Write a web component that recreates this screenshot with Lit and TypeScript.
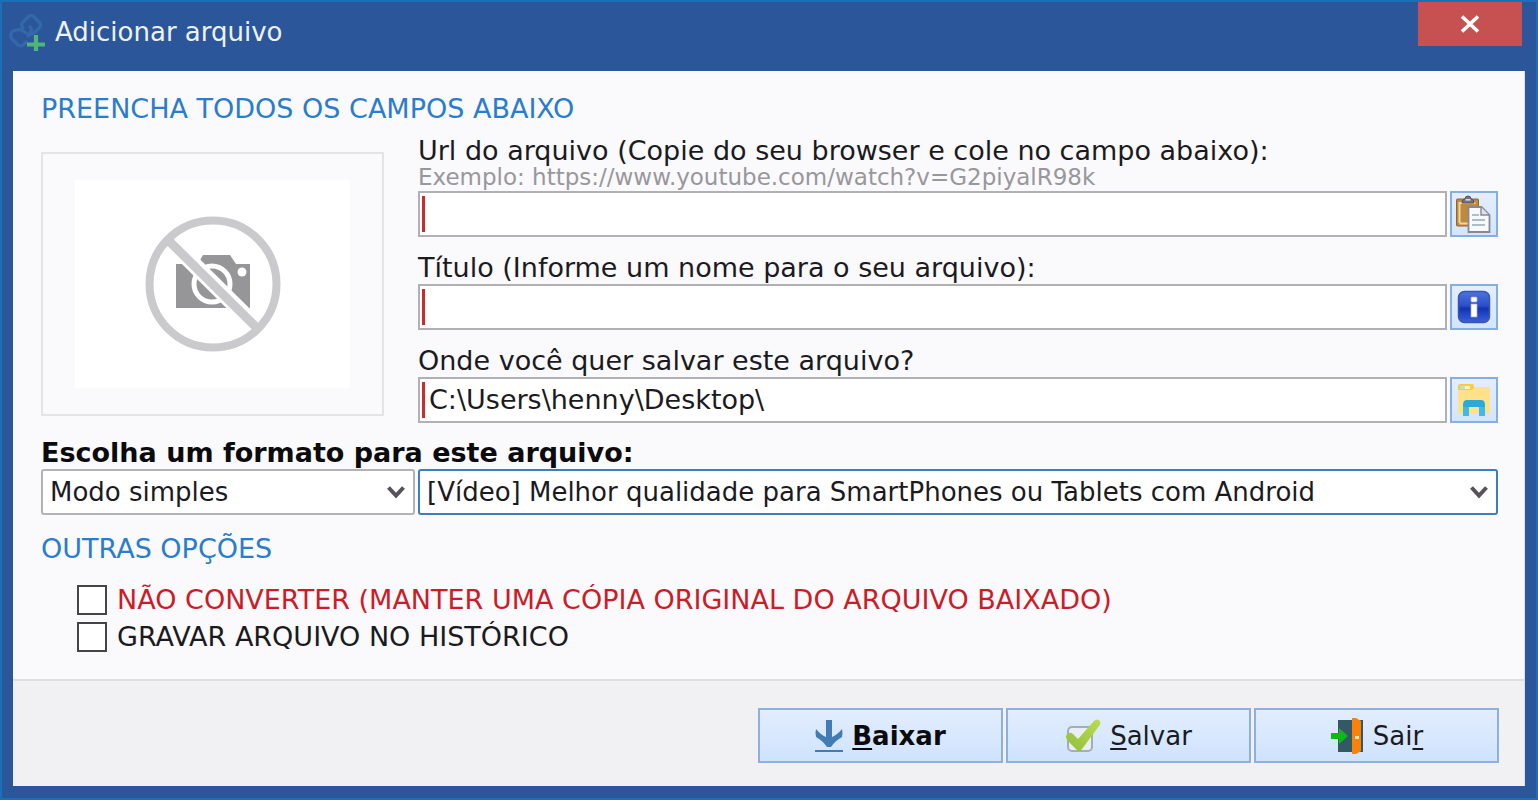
import { LitElement, html, css } from "lit";
import { customElement, state } from "lit/decorators.js";

const linkIcon = html`<svg width="38" height="38" viewBox="0 0 38 38" aria-hidden="true" fill="none">
  <g stroke="#3468ab" stroke-width="3.2" stroke-linecap="round" stroke-linejoin="round">
    <path d="M14 15q-3-3 0-6l5-5q3-3 6 0l5 5q3 3 0 6l-5 5q-3 2-5 1"/>
    <path d="M21 14q3 3 0 6l-2 3M8 17q-5 0-6 4-1 3 1 5l5 5q3 3 6 1l3-3M8 17q4-1 6 1l3 2"/>
  </g>
  <path d="M27 22v18M18 31.500h18" stroke="#4fb57c" stroke-width="4.200"/>
</svg>`;

const noPhotoIcon = html`<svg width="136" height="136" viewBox="0 0 136 136" role="img" aria-label="Sem imagem">
  <path d="M31 48h22l5-9h27l6 9h14v44H31z" fill="#969597"/>
  <circle cx="67" cy="68" r="18" fill="#969597" stroke="#fff" stroke-width="5"/>
  <circle cx="97" cy="56" r="4.500" fill="#fff"/>
  <path d="M20 20l93 92" stroke="#fff" stroke-width="16"/>
  <path d="M22 23l90 89" stroke="#cac9cb" stroke-width="9"/>
  <circle cx="68" cy="68" r="63.500" fill="none" stroke="#cac9cb" stroke-width="8"/>
</svg>`;

const pasteIcon = html`<svg width="38" height="38" viewBox="0 0 38 38" aria-hidden="true">
  <rect x="1.500" y="4" width="22" height="27" rx="1" fill="#c08a3c" stroke="#946526"/>
  <path d="M4.500 28V8h16" fill="none" stroke="#f2d49c" stroke-width="2"/>
  <path d="M4.500 28.500h9" stroke="#f2d49c" stroke-width="2"/>
  <path d="M7 8q0-4 3-4 0-3 3-3t3 3q3 0 3 4z" fill="#77747a" stroke="#55525a"/>
  <rect x="10.500" y="4" width="5" height="1.600" fill="#d8d8da"/>
  <path d="M13.500 12h13l8 8v17h-21z" fill="#f7f9fc" stroke="#858992" stroke-width="1.800"/>
  <path d="M26 12v8h8" fill="#dfe4ec" stroke="#858992" stroke-width="1.400"/>
  <path d="M17 20h7M17 25h13M17 30h13" stroke="#aebdcd" stroke-width="1.800"/>
</svg>`;

const infoIcon = html`<svg width="38" height="38" viewBox="0 0 38 38" aria-hidden="true">
  <defs><linearGradient id="info" x1="0" y1="0" x2="0" y2="1">
    <stop offset="0" stop-color="#4d74dc"/><stop offset=".45" stop-color="#2c50cb"/>
    <stop offset=".55" stop-color="#1234b5"/><stop offset="1" stop-color="#3a60dc"/>
  </linearGradient></defs>
  <rect x="3.500" y="3.500" width="31" height="31" rx="6" fill="url(#info)" stroke="#3c55a8" stroke-width="1.500"/>
  <g fill="#fff" stroke="#a9aebd" stroke-width=".7">
    <rect x="16" y="9" width="6" height="5" rx="1"/>
    <path d="M16 16h6v13h-6z"/>
  </g>
</svg>`;

const folderIcon = html`<svg width="38" height="38" viewBox="0 0 38 38" aria-hidden="true">
  <path d="M3 5q0-2 2-2h12q2 0 2 2v4H3z" fill="#f8ce3c"/>
  <rect x="5" y="5" width="5" height="3" fill="#cbe0ba"/><rect x="10" y="5" width="5" height="3" fill="#fff3b8"/>
  <path d="M3 9h14l3-3h13q2 0 2 2v24q0 1-2 1H5q-2 0-2-2z" fill="#fde28a"/>
  <path d="M8 35V24q0-5 4-5h14q4 0 4 5v11h-6v-9H14v9z" fill="#28aadc"/>
  <path d="M8 26v9h6v-9zM24 26v9h6v-9z" fill="#3fb9e6"/>
</svg>`;

const downloadIcon = html`<svg width="28" height="34" viewBox="0 0 28 34" aria-hidden="true">
  <path d="M11 1h6v17q5-2 10-8 1 4 0 8-7 4-11 10h-4Q8 22 1 18q-1-4 0-8 5 6 10 8z" fill="#437cb3"/>
  <path d="M0 32h28" stroke="#437cb3" stroke-width="2"/>
</svg>`;

const saveIcon = html`<svg width="36" height="34" viewBox="0 0 36 34" aria-hidden="true">
  <defs><linearGradient id="tick" x1="1" y1="0" x2="0" y2="1">
    <stop offset="0" stop-color="#bedb4c"/><stop offset="1" stop-color="#8fbf3c"/>
  </linearGradient></defs>
  <rect x="3" y="8" width="24" height="24" rx="4" fill="#e8eef4" stroke="#a3adb6" stroke-width="2"/>
  <path d="M1 18q0-3 3-4 2-1 4 1l5 5L29 2q3-3 6 0 1 3-1 5L17 30q-3 4-6 0L2 21z" fill="url(#tick)"/>
</svg>`;

const exitIcon = html`<svg width="34" height="38" viewBox="0 0 34 38" aria-hidden="true">
  <rect x="8" y="3" width="25" height="32" fill="#335a64"/>
  <path d="M22 1h4l5 3v30l-5 3h-4z" fill="#fb8208"/>
  <rect x="25" y="19" width="4" height="3" fill="#ffe2b8"/>
  <path d="M1 16h8v-5l9 8-9 8v-5H1z" fill="#0fb816"/>
</svg>`;

const chevron = html`<svg class="chevron" width="20" height="16" viewBox="0 0 20 16" aria-hidden="true">
  <path d="M2.500 3.500 10 11.500l7.500-8" fill="none" stroke="#56545a" stroke-width="4"/>
</svg>`;

@customElement("app-root")
export class AppRoot extends LitElement {
  @state() private url = "";
  @state() private titulo = "";
  @state() private destino = "C:\\Users\\henny\\Desktop\\";

  static styles = css`
    :host {
      display: flex;
      flex-direction: column;
      box-sizing: border-box;
      min-height: 100vh;
      padding: 0 11px 12px;
      border: 2px solid #1a6fb8;
      background: #2b579a;
      font: 26px/28px "DejaVu Sans", Verdana, sans-serif;
      color: #1b1b1f;
    }
    * { box-sizing: border-box; }
    svg { display: block; flex: none; }
    button, input, select { font: inherit; color: inherit; margin: 0; }
    .titlebar { display: flex; align-items: flex-start; height: 69px; color: #eef2f8; }
    .brand { display: flex; align-items: center; flex: 1; gap: 8px; height: 60px; margin-left: -4px; }
    .title { margin: 0; font-size: 26px; font-weight: 400; }
    .close {
      display: grid; place-items: center;
      width: 104px; height: 44px; margin-right: 3px; padding: 0;
      border: 0; background: #c75050;
    }
    .window { display: flex; flex-direction: column; flex: 1; background: #faf9fc; border-right: 1px solid #d7e0ee; }
    .content { flex: 1; padding: 24px 26px 24px 28px; }
    .heading { margin: 0; font-size: 27px; font-weight: 400; color: #2a7dcb; }
    .details { display: grid; grid-template-columns: 343px 1fr; gap: 34px; margin-top: 14px; }
    .preview {
      display: grid; height: 264px; margin-top: 15px; padding: 26px 32px;
      border: 2px solid #e4e3e6;
    }
    .photo { display: grid; place-items: center; background: #fff; }
    .fields { display: flex; flex-direction: column; gap: 17px; min-width: 0; }
    .field { display: flex; flex-direction: column; gap: 2px; min-width: 0; }
    .label { display: block; font-size: 27px; white-space: nowrap; }
    .strong { font-weight: 700; color: #0b0b0d; }
    .hint { font-size: 23px; line-height: 24px; color: #98979b; white-space: nowrap; }
    .line { display: flex; gap: 3px; }
    .box {
      display: flex; flex: 1; min-width: 0; height: 46px; padding: 2px;
      border: 2px solid #afb1b5; background: #fff;
    }
    .mark { width: 3px; margin: 1px 0; background: #cb2a31; }
    .input { flex: 1; min-width: 0; padding: 0 4px; border: 0; outline: 0; background: none; font-size: 27px; line-height: 36px; }
    .tool {
      display: grid; place-items: center; width: 48px; height: 46px; padding: 0;
      border: 2px solid #85aee3; background: linear-gradient(#e3eefe, #d3e5fd);
    }
    .formats { display: flex; flex-direction: column; gap: 2px; margin-top: 16px; }
    .choices { display: grid; grid-template-columns: 374px 1fr; gap: 3px; }
    .picker { display: grid; align-items: center; min-width: 0; }
    .select {
      grid-area: 1 / 1; appearance: none; width: 100%; height: 46px; padding: 0 36px 0 7px;
      border: 2px solid #b1b3b6; border-radius: 3px; background: #fff; outline: 0; line-height: 36px;
    }
    .active { border-color: #3d7fbe; }
    .chevron { grid-area: 1 / 1; justify-self: end; margin-right: 9px; pointer-events: none; }
    .options { margin-top: 20px; }
    .checks { display: flex; flex-direction: column; gap: 7px; margin: 22px 0 0 36px; }
    .check { display: flex; align-items: center; gap: 10px; font-size: 27px; line-height: 30px; }
    .warning { color: #cb1c28; }
    .checkbox {
      appearance: none; flex: none; width: 30px; height: 30px;
      border: 2px solid #464449; background: #fff;
    }
    .checkbox:checked { box-shadow: inset 0 0 0 5px #fff; background: #464449; }
    .footer {
      display: flex; justify-content: flex-end; gap: 3px;
      padding: 27px 25px 23px; border-top: 2px solid #dfdee1; background: #f1f0f2;
    }
    .action {
      display: flex; align-items: center; justify-content: center; gap: 9px;
      width: 245px; height: 55px; padding: 0;
      border: 2px solid #8ab1e2; background: linear-gradient(#e2edfe, #cfe3fd);
    }
    .key { text-decoration: underline; text-decoration-thickness: 2px; text-underline-offset: 3px; }
  `;

  private onUrl(e: Event) { this.url = (e.target as HTMLInputElement).value; }
  private onTitulo(e: Event) { this.titulo = (e.target as HTMLInputElement).value; }
  private onDestino(e: Event) { this.destino = (e.target as HTMLInputElement).value; }

  render() {
    return html`
      <header class="titlebar">
        <div class="brand">${linkIcon}<h1 class="title">Adicionar arquivo</h1></div>
        <button class="close" type="button" aria-label="Fechar">
          <svg width="20" height="18" viewBox="0 0 20 18" aria-hidden="true">
            <path d="M2 1.500 18 16.500M18 1.500 2 16.500" stroke="#fff" stroke-width="3.600"/>
          </svg>
        </button>
      </header>
      <main class="window">
        <div class="content">
          <h2 class="heading">PREENCHA TODOS OS CAMPOS ABAIXO</h2>
          <section class="details">
            <div class="preview"><div class="photo">${noPhotoIcon}</div></div>
            <div class="fields">
              <div class="field">
                <div>
                  <label class="label" for="url">Url do arquivo (Copie do seu browser e cole no campo abaixo):</label>
                  <div class="hint" id="url-hint">Exemplo: https://www.youtube.com/watch?v=G2piyalR98k</div>
                </div>
                <div class="line">
                  <div class="box"><span class="mark"></span>
                    <input class="input" id="url" type="text" aria-describedby="url-hint" .value=${this.url} @input=${this.onUrl}></div>
                  <button class="tool" type="button" aria-label="Colar">${pasteIcon}</button>
                </div>
              </div>
              <div class="field">
                <label class="label" for="titulo">Título (Informe um nome para o seu arquivo):</label>
                <div class="line">
                  <div class="box"><span class="mark"></span>
                    <input class="input" id="titulo" type="text" .value=${this.titulo} @input=${this.onTitulo}></div>
                  <button class="tool" type="button" aria-label="Informações">${infoIcon}</button>
                </div>
              </div>
              <div class="field">
                <label class="label" for="destino">Onde você quer salvar este arquivo?</label>
                <div class="line">
                  <div class="box"><span class="mark"></span>
                    <input class="input" id="destino" type="text" .value=${this.destino} @input=${this.onDestino}></div>
                  <button class="tool" type="button" aria-label="Procurar pasta">${folderIcon}</button>
                </div>
              </div>
            </div>
          </section>
          <section class="formats">
            <label class="label strong" for="formato">Escolha um formato para este arquivo:</label>
            <div class="choices">
              <div class="picker">
                <select class="select" aria-label="Modo"><option>Modo simples</option></select>${chevron}
              </div>
              <div class="picker">
                <select class="select active" id="formato">
                  <option>[Vídeo] Melhor qualidade para SmartPhones ou Tablets com Android</option>
                </select>${chevron}
              </div>
            </div>
          </section>
          <section class="options">
            <h2 class="heading">OUTRAS OPÇÕES</h2>
            <div class="checks">
              <label class="check warning"><input class="checkbox" type="checkbox">NÃO CONVERTER (MANTER UMA CÓPIA ORIGINAL DO ARQUIVO BAIXADO)</label>
              <label class="check"><input class="checkbox" type="checkbox">GRAVAR ARQUIVO NO HISTÓRICO</label>
            </div>
          </section>
        </div>
        <footer class="footer">
          <button class="action strong" type="button">${downloadIcon}<span><span class="key">B</span>aixar</span></button>
          <button class="action" type="button">${saveIcon}<span><span class="key">S</span>alvar</span></button>
          <button class="action" type="button">${exitIcon}<span>Sai<span class="key">r</span></span></button>
        </footer>
      </main>
    `;
  }
}
